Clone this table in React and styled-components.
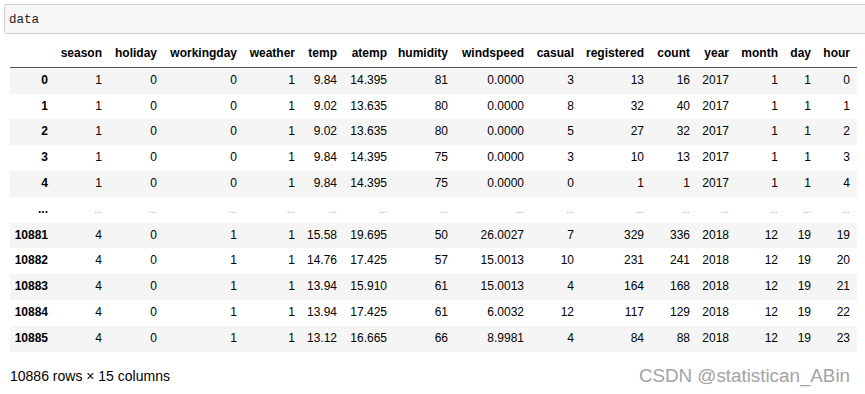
import React from "react"
import styled, { createGlobalStyle } from "styled-components"

const GlobalStyle = createGlobalStyle`
  body {
    margin: 0;
    background: #fff;
    font-family: "Liberation Sans", Arial, sans-serif;
    color: #000;
  }
`

const Page = styled.div`
  width: 865px;
  height: 394px;
  overflow: hidden;
  padding: 4px 0 0 4px;
  box-sizing: border-box;
`

const InputBox = styled.div`
  height: 30px;
  margin-right: -8px;
  box-sizing: border-box;
  border: 1px solid #cfcfcf;
  border-radius: 2px;
  background: #f7f7f7;
  padding: 2px 4px 0;
  display: flex;
  align-items: center;
  font-family: "Liberation Mono", "Courier New", monospace;
  font-size: 12.5px;
  color: #222;
`

const Output = styled.div`
  padding: 6px 0 0 6px;
`

const Table = styled.table`
  border-collapse: collapse;
  table-layout: fixed;
  width: 847px;
  font-size: 12px;

  thead {
    border-bottom: 1px solid #555;
  }

  th, td {
    padding: 6px 7px 6px 0;
    text-align: right;
    line-height: 13.8px;
    white-space: nowrap;
  }

  thead th {
    padding-top: 7px;
  }

  th {
    font-weight: bold;
  }

  tbody tr:nth-child(odd) {
    background: #f5f5f5;
  }
`

const Ellipsis = styled.td`
  color: ${p => (p.$index ? "#000" : "#a8a8a8")};
  font-weight: ${p => (p.$index ? "bold" : "normal")};
  font-size: ${p => (p.$index ? "12px" : "10px")};
`

const Footer = styled.div`
  display: flex;
  justify-content: space-between;
  align-items: center;
  margin-top: 13px;
  padding-right: 15px;
  font-size: 14px;
`

const Watermark = styled.span`
  font-size: 18.8px;
  color: #a3a3a3;
  text-shadow: 0 0 1px #fff;
`

const widths = [45, 54, 55, 80, 58, 42, 50, 61, 76, 50, 70, 46, 39, 49, 33, 39]

const columns = ["season", "holiday", "workingday", "weather", "temp", "atemp", "humidity",
  "windspeed", "casual", "registered", "count", "year", "month", "day", "hour"]

const head = [
  ["0", 1, 0, 0, 1, "9.84", "14.395", 81, "0.0000", 3, 13, 16, 2017, 1, 1, 0],
  ["1", 1, 0, 0, 1, "9.02", "13.635", 80, "0.0000", 8, 32, 40, 2017, 1, 1, 1],
  ["2", 1, 0, 0, 1, "9.02", "13.635", 80, "0.0000", 5, 27, 32, 2017, 1, 1, 2],
  ["3", 1, 0, 0, 1, "9.84", "14.395", 75, "0.0000", 3, 10, 13, 2017, 1, 1, 3],
  ["4", 1, 0, 0, 1, "9.84", "14.395", 75, "0.0000", 0, 1, 1, 2017, 1, 1, 4],
]

const tail = [
  ["10881", 4, 0, 1, 1, "15.58", "19.695", 50, "26.0027", 7, 329, 336, 2018, 12, 19, 19],
  ["10882", 4, 0, 1, 1, "14.76", "17.425", 57, "15.0013", 10, 231, 241, 2018, 12, 19, 20],
  ["10883", 4, 0, 1, 1, "13.94", "15.910", 61, "15.0013", 4, 164, 168, 2018, 12, 19, 21],
  ["10884", 4, 0, 1, 1, "13.94", "17.425", 61, "6.0032", 12, 117, 129, 2018, 12, 19, 22],
  ["10885", 4, 0, 1, 1, "13.12", "16.665", 66, "8.9981", 4, 84, 88, 2018, 12, 19, 23],
]

const Row = ({ cells }) => (
  <tr>
    <th>{cells[0]}</th>
    {cells.slice(1).map((v, i) => <td key={i}>{v}</td>)}
  </tr>
)

const App = () => {
  return (
    <Page>
      <GlobalStyle />
      <InputBox>data</InputBox>
      <Output>
        <Table>
          <colgroup>
            {widths.map((w, i) => <col key={i} style={{ width: w }} />)}
          </colgroup>
          <thead>
            <tr>
              <th></th>
              {columns.map(c => <th key={c}>{c}</th>)}
            </tr>
          </thead>
          <tbody>
            {head.map(r => <Row key={r[0]} cells={r} />)}
            <tr>
              <Ellipsis $index>...</Ellipsis>
              {columns.map(c => <Ellipsis key={c}>...</Ellipsis>)}
            </tr>
            {tail.map(r => <Row key={r[0]} cells={r} />)}
          </tbody>
        </Table>
        <Footer>
          <span>10886 rows × 15 columns</span>
          <Watermark>CSDN @statistican_ABin</Watermark>
        </Footer>
      </Output>
    </Page>
  )
}

export default App
